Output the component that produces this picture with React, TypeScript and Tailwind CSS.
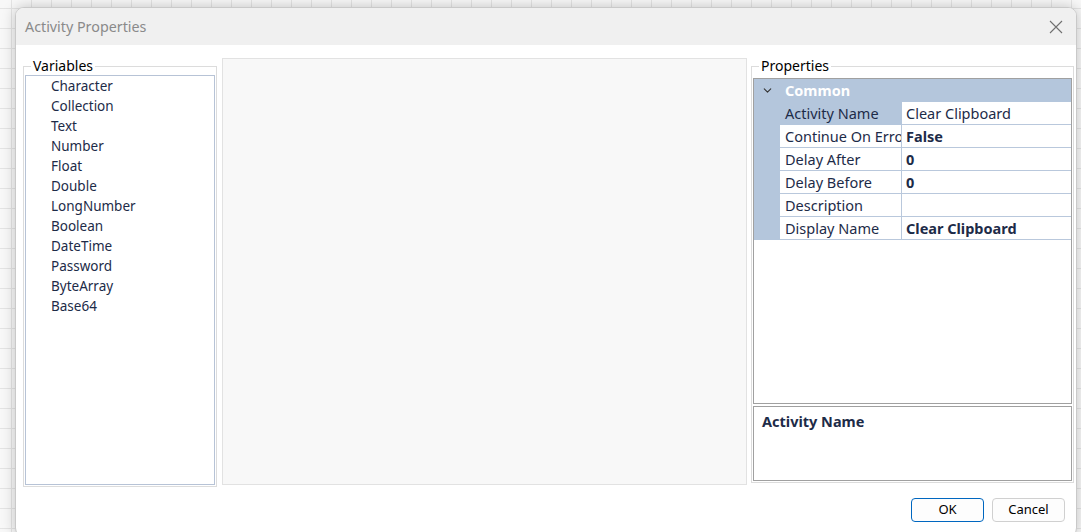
import { ChevronDown } from "lucide-react";

const variableTypes = [
  "Character",
  "Collection",
  "Text",
  "Number",
  "Float",
  "Double",
  "LongNumber",
  "Boolean",
  "DateTime",
  "Password",
  "ByteArray",
  "Base64",
];

const properties = [
  { name: "Activity Name", value: "Clear Clipboard", bold: false, selected: true },
  { name: "Continue On Error", value: "False", bold: true, selected: false },
  { name: "Delay After", value: "0", bold: true, selected: false },
  { name: "Delay Before", value: "0", bold: true, selected: false },
  { name: "Description", value: "", bold: false, selected: false },
  { name: "Display Name", value: "Clear Clipboard", bold: true, selected: false },
];

function PropertyRow({ p }: { p: (typeof properties)[number] }) {
  return (
    <div className="flex h-[23px]">
      <div className="w-[26px] bg-[#b4c6dc]" />
      <div
        className={
          p.selected
            ? "w-[122px] bg-[#b4c6dc] border-r border-[#b4c6dc] pl-[5px] leading-[23px] whitespace-nowrap overflow-hidden"
            : "w-[122px] bg-white border-b border-r border-[#b9c8dc] pl-[5px] leading-[23px] whitespace-nowrap overflow-hidden"
        }
      >
        {p.name}
      </div>
      <div
        className={
          "flex-1 border-b border-[#b9c8dc] pl-[4px] leading-[23px] whitespace-nowrap " +
          (p.bold ? "font-bold" : "")
        }
      >
        {p.value}
      </div>
    </div>
  );
}

export default function App() {
  return (
    <div
      className="w-[1081px] h-[532px] overflow-hidden bg-[#f8f8f8] bg-[linear-gradient(to_right,#e4e4e4_1px,transparent_1px),linear-gradient(to_bottom,#e4e4e4_1px,transparent_1px)] bg-[size:20px_20px] bg-[position:11px_8px] pt-[7px] pl-[15px]"
      style={{ fontFamily: '"Noto Sans", sans-serif' }}
    >
      <div className="w-[1062px] h-[530px] rounded-[9px] border border-[#c9c9c9] bg-white shadow-[0_0_14px_rgba(0,0,0,0.22)] overflow-hidden flex flex-col">
        {/* title bar */}
        <div className="h-[37px] bg-[#f0f0f0] flex items-center justify-between pl-[9px] pr-[13px]">
          <span className="text-[14.3px] text-[#8a8a8a]">Activity Properties</span>
          <svg width="14" height="14" viewBox="0 0 14 14" className="text-[#707070]">
            <path d="M1 1 L13 13 M13 1 L1 13" stroke="currentColor" strokeWidth="1.1" fill="none" />
          </svg>
        </div>

        {/* body */}
        <div className="flex pl-[7px] pt-[13px] text-[#1d2b48]">
          {/* variables */}
          <fieldset className="w-[194px] h-[429px] border border-[#dcdcdc] px-[1px] pb-[1px] flex flex-col">
            <legend className="ml-[6px] px-[2px] text-[14px] leading-[16px] text-black">Variables</legend>
            <div className="flex-1 mt-[1px] border border-[#b7c3d6] pl-[25px] pt-0">
              {variableTypes.map((v) => (
                <div key={v} className="leading-[20px] text-[13.5px]">
                  {v}
                </div>
              ))}
            </div>
          </fieldset>

          {/* canvas */}
          <div className="ml-[5px] w-[525px] h-[427px] bg-[#f8f8f8] border border-[#e2e2e2]" />

          {/* properties */}
          <fieldset className="ml-[4px] w-[323px] h-[425px] border border-[#dcdcdc] px-[1px] pb-[1px] flex flex-col">
            <legend className="ml-[6px] px-[2px] text-[14px] leading-[16px] text-black">Properties</legend>
            <div className="mt-[4px] h-[328px] border border-[#a0a0a0] flex flex-col text-[14.5px]">
              <div className="h-[23px] bg-[#b4c6dc] flex items-center">
                <div className="w-[26px] flex justify-center">
                  <ChevronDown size={13} strokeWidth={2} className="text-[#333]" />
                </div>
                <span className="pl-[5px] font-bold text-white">Common</span>
              </div>
              {properties.map((p) => (
                <PropertyRow key={p.name} p={p} />
              ))}
            </div>
            <div className="mt-[2px] h-[75px] border border-[#a0a0a0] pl-[8px] pt-[4px]">
              <div className="font-bold text-[14.5px] text-[#1d2b48]">Activity Name</div>
            </div>
          </fieldset>
        </div>

        {/* footer */}
        <div className="flex justify-end gap-[8px] pr-[11px] pt-[11px] text-[13px] text-black">
          <button className="w-[73px] h-[24px] rounded-[4px] border border-[#0067c0] bg-[#fdfdfd]">OK</button>
          <button className="w-[73px] h-[24px] rounded-[4px] border border-[#d0d0d0] bg-[#fdfdfd]">Cancel</button>
        </div>
      </div>
    </div>
  );
}
